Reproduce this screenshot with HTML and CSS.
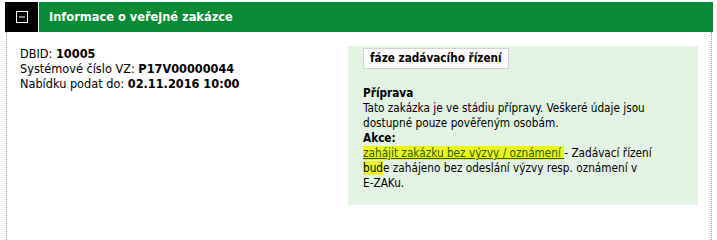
FILE: index.html
```html
<!DOCTYPE html>
<html lang="cs">
<head>
<meta charset="utf-8">
<title>Informace o veřejné zakázce</title>
<link rel="stylesheet" href="styles.css">
</head>
<body>
<section class="box">
  <header class="head">
    <span class="toggle">
      <svg width="12" height="12" viewBox="0 0 12 12" aria-hidden="true">
        <rect x="0.5" y="0.5" width="11" height="11" fill="none" stroke="#fff" stroke-width="1"/>
        <rect x="3" y="5.5" width="6" height="1" fill="#fff"/>
      </svg>
    </span>
    <h2 class="title">Informace o veřejné zakázce</h2>
  </header>
  <div class="body">
    <div class="info">
      <div>DBID: <b>10005</b></div>
      <div>Systémové číslo VZ: <b>P17V00000044</b></div>
      <div>Nabídku podat do: <b>02.11.2016 10:00</b></div>
    </div>
    <div class="phase">
      <div class="badge">fáze zadávacího řízení</div>
      <div class="phase-text">
        <b>Příprava</b><br>
        Tato zakázka je ve stádiu přípravy. Veškeré údaje jsou dostupné pouze pověřeným osobám.<br>
        <b>Akce:</b><br>
        <span class="mark"><a href="#" class="action">zahájit zakázku bez výzvy / oznámení </a></span>- Zadávací řízení <span class="mark">bud</span>e zahájeno bez odeslání výzvy resp. oznámení v <span class="nowrap">E-ZAKu.</span>
      </div>
    </div>
  </div>
</section>
</body>
</html>
```
FILE: styles.css
```css
html, body {
  margin: 0;
  padding: 0;
  height: 100%;
  background: #fff;
}
body {
  font-family: "DejaVu Sans Condensed", "DejaVu Sans", sans-serif;
  font-size: 12px;
  line-height: 15px;
  color: #000;
}
.box {
  margin: 2px 4px 0 5px;
  min-height: calc(100% - 2px);
  display: flex;
  flex-direction: column;
}
.head {
  display: flex;
  height: 30px;
  flex: none;
  gap: 1px;
  background: #fff;
}
.toggle {
  width: 33px;
  background: #000;
  display: flex;
  align-items: center;
  justify-content: center;
}
.toggle svg {
  display: block;
}
.title {
  flex: 1;
  margin: 0;
  background: #098a35;
  color: #fff;
  font-size: 12.7px;
  font-weight: bold;
  line-height: 30px;
  padding-left: 10px;
}
.body {
  flex: 1;
  margin: 0 1px;
  border-left: 1px dotted #a0a0a0;
  border-right: 1px dotted #a0a0a0;
  display: flex;
  justify-content: space-between;
  align-items: flex-start;
  padding: 14px 13px 8px 13px;
}
.info {
  font-size: 12.6px;
}
.info b, .phase b {
  font-weight: bold;
}
.phase {
  width: 350px;
  box-sizing: border-box;
  background: #e3f3e3;
  padding: 2px 22px 14px 15px;
  font-size: 11.7px;
}
.badge {
  display: inline-block;
  background: #fff;
  border: 1px solid #d4d4d4;
  font-weight: bold;
  padding: 2px 6px 2px 6px;
  line-height: 15px;
}
.phase-text {
  margin-top: 17px;
}
.mark {
  background: #e9f51c;
}
.action {
  color: #2f5d0e;
  text-decoration: underline;
}
.nowrap {
  white-space: nowrap;
}
```
